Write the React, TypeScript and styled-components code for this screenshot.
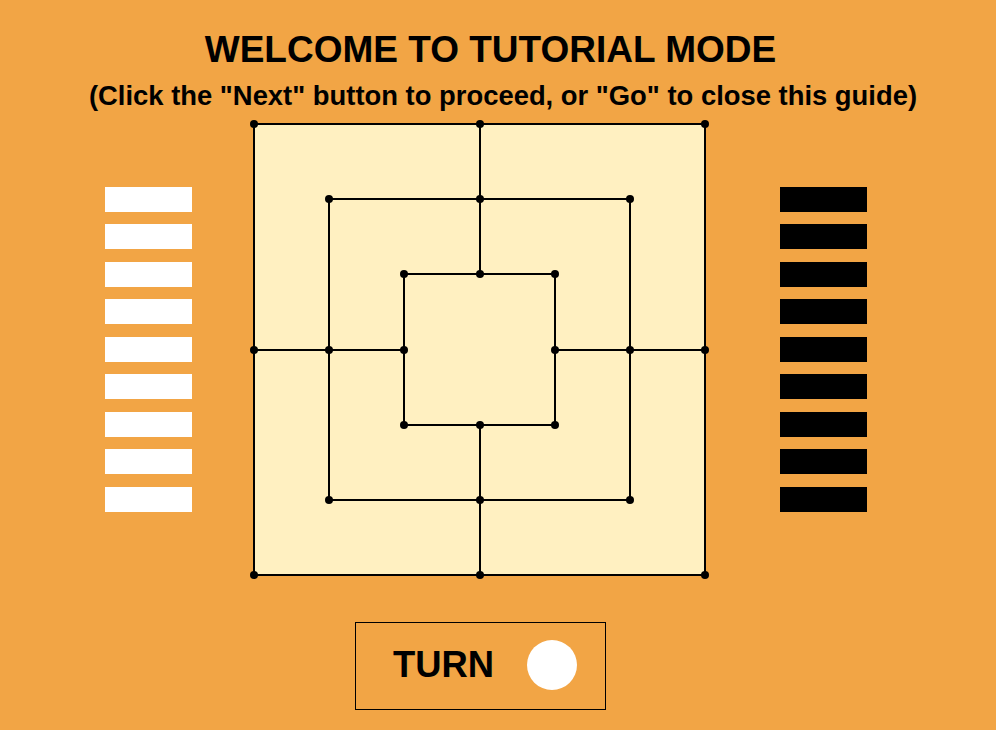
import React from "react";
import styled, { createGlobalStyle } from "styled-components";

const ORANGE = "#F2A545";
const BOARD_FILL = "#FFF0C1";

const Global = createGlobalStyle`
  html, body { margin: 0; padding: 0; background: ${ORANGE}; }
  body { font-family: "Liberation Sans", Arial, sans-serif; }
`;

const Page = styled.div`
  width: 996px;
  height: 730px;
  background: ${ORANGE};
  display: flex;
  flex-direction: column;
  overflow: hidden;
  color: #000;
`;

const Title = styled.h1`
  margin: 30.5px 0 0 0;
  padding-right: 15px;
  font-size: 37px;
  line-height: 37px;
  font-weight: 700;
  text-align: center;
  white-space: nowrap;
`;

const Subtitle = styled.p`
  margin: 14.5px 0 0 0;
  padding-left: 10px;
  font-size: 27.4px;
  line-height: 27px;
  font-weight: 700;
  text-align: center;
  white-space: nowrap;
`;

const Arena = styled.div`
  display: flex;
  align-items: flex-start;
  margin-top: 10px;
  padding-left: 105px;
`;

const Rack = styled.div<{ $gapLeft: number }>`
  display: flex;
  flex-direction: column;
  gap: 12.5px;
  margin-top: 67.6px;
  margin-left: ${(p) => p.$gapLeft}px;
`;

const Piece = styled.div<{ $color: string }>`
  width: 87px;
  height: 25px;
  background: ${(p) => p.$color};
`;

const BoardSvg = styled.svg`
  display: block;
  width: 461px;
  height: 461px;
  margin-left: 57px;
  flex: none;
`;

const TurnBox = styled.div`
  box-sizing: border-box;
  width: 251px;
  height: 88px;
  margin: 42px 0 0 355px;
  border: 1px solid #000;
  display: flex;
  align-items: center;
  padding: 0 0 3px 37px;
  gap: 33px;
`;

const TurnLabel = styled.span`
  font-size: 36.4px;
  line-height: 36px;
  font-weight: 700;
`;

const TurnDot = styled.div`
  width: 50px;
  height: 50px;
  border-radius: 50%;
  background: #fff;
`;

// [left x, top y, right x, bottom y] for outer, middle, inner squares
const squares: [number, number, number, number][] = [
  [254, 124, 705, 575],
  [329, 199, 630, 500],
  [404, 274, 555, 425],
];

const Board: React.FC = () => {
  const midX = 480;
  const midY = 350;
  const pts: [number, number][] = [];
  squares.forEach(([l, t, r, b]) => {
    pts.push([l, t], [midX, t], [r, t], [l, midY], [r, midY], [l, b], [midX, b], [r, b]);
  });
  return (
    <BoardSvg viewBox="249 119 461 461">
      <rect x={254} y={124} width={451} height={451} fill={BOARD_FILL} />
      {squares.map(([l, t, r, b]) => (
        <rect
          key={l}
          x={l}
          y={t}
          width={r - l}
          height={b - t}
          fill="none"
          stroke="#000"
          strokeWidth={2}
        />
      ))}
      <g stroke="#000" strokeWidth={2}>
        <line x1={midX} y1={124} x2={midX} y2={274} />
        <line x1={midX} y1={425} x2={midX} y2={575} />
        <line x1={254} y1={midY} x2={404} y2={midY} />
        <line x1={555} y1={midY} x2={705} y2={midY} />
      </g>
      {pts.map(([x, y], i) => (
        <circle key={i} cx={x} cy={y} r={4} fill="#000" />
      ))}
    </BoardSvg>
  );
};

const nine = Array.from({ length: 9 }, (_, i) => i);

export default function App() {
  return (
    <Page>
      <Global />
      <Title>WELCOME TO TUTORIAL MODE</Title>
      <Subtitle>(Click the "Next" button to proceed, or "Go" to close this guide)</Subtitle>
      <Arena>
        <Rack $gapLeft={0}>
          {nine.map((i) => (
            <Piece key={i} $color="#ffffff" />
          ))}
        </Rack>
        <Board />
        <Rack $gapLeft={70}>
          {nine.map((i) => (
            <Piece key={i} $color="#000000" />
          ))}
        </Rack>
      </Arena>
      <TurnBox>
        <TurnLabel>TURN</TurnLabel>
        <TurnDot />
      </TurnBox>
    </Page>
  );
}
